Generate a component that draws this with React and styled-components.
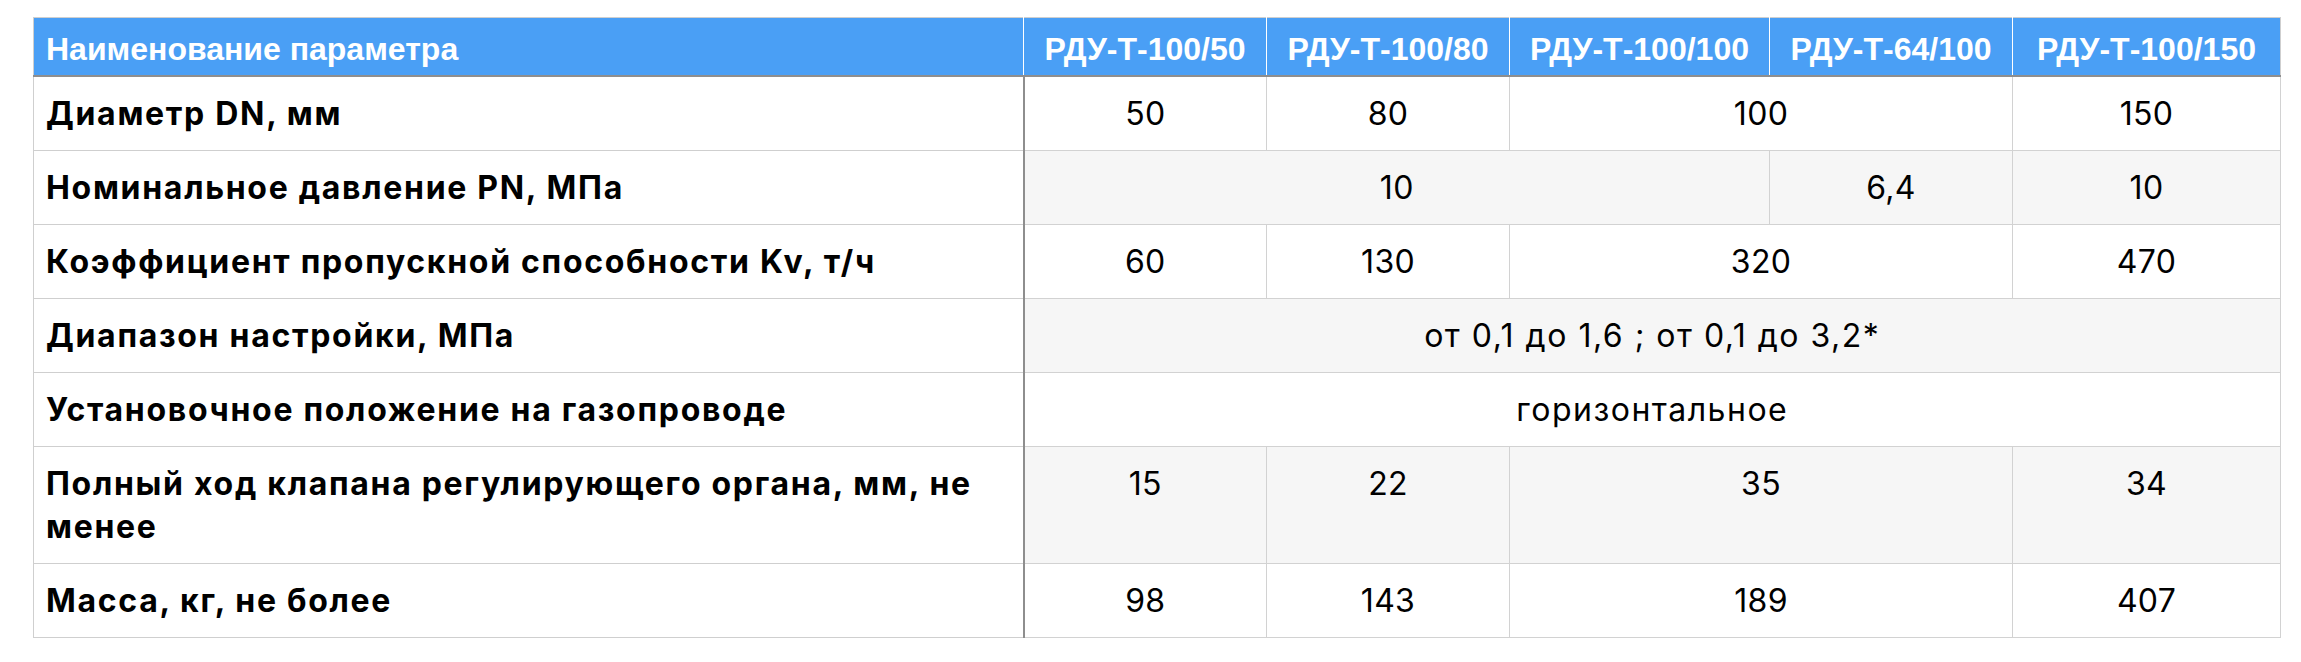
import React from "react";
import styled, { createGlobalStyle } from "styled-components";

const GlobalStyle = createGlobalStyle`
  body {
    margin: 0;
    background: #fff;
    font-family: "Liberation Sans", Arial, Helvetica, sans-serif;
  }
`;

const Page = styled.div`
  padding: 17px 21px 26px 33px;
`;

const Table = styled.table`
  width: 100%;
  table-layout: fixed;
  border-collapse: collapse;
  border: 1px solid #cfcfcf;
  font-size: 32px;
  line-height: 43px;
  color: #000;
`;

const HeadCell = styled.th`
  background: #4a9ff5;
  color: #fff;
  font-family: "Liberation Sans", Arial, sans-serif;
  font-weight: bold;
  text-align: ${(p) => (p.$left ? "left" : "center")};
  padding: 10px 12px 4px;
  border-left: 1px solid #fff;
  border-right: 1px solid #fff;
  border-top: 1px solid #cfcfcf;
  border-bottom: 2px solid #8e8e8e;
  white-space: nowrap;
  overflow: hidden;

  &:first-child {
    border-left: 1px solid #cfcfcf;
  }
  &:last-child {
    border-right: 1px solid #cfcfcf;
  }
`;

const LabelCell = styled.td`
  font-family: Inter, "Liberation Sans", sans-serif;
  font-weight: 700;
  letter-spacing: 1.7px;
  text-align: left;
  vertical-align: top;
  padding: 15px 12px 15px;
  border-top: 1px solid #cfcfcf;
  border-bottom: 1px solid #cfcfcf;
  border-right: 2px solid #8e8e8e;
  background: #fff;
  white-space: nowrap;
`;

const ValueCell = styled.td`
  font-family: Inter, "Liberation Sans", sans-serif;
  letter-spacing: ${(p) => (p.$text ? "1.5px" : "0.3px")};
  text-align: center;
  vertical-align: top;
  padding: 15px 12px 15px;
  border: 1px solid #d2d2d2;
  background: ${(p) => (p.$shaded ? "#f6f6f6" : "#fff")};
`;

const models = ["РДУ-Т-100/50", "РДУ-Т-100/80", "РДУ-Т-100/100", "РДУ-Т-64/100", "РДУ-Т-100/150"];
const widths = [990, 243, 243, 260, 243, 268];

const rows = [
  { label: "Диаметр DN, мм", cells: [["50"], ["80"], ["100", 2], ["150"]] },
  { label: "Номинальное давление PN, МПа", cells: [["10", 3], ["6,4"], ["10"]] },
  { label: "Коэффициент пропускной способности Kv, т/ч", cells: [["60"], ["130"], ["320", 2], ["470"]] },
  { label: "Диапазон настройки, МПа", cells: [["от 0,1 до 1,6 ; от 0,1 до 3,2*", 5]] },
  { label: "Установочное положение на газопроводе", cells: [["горизонтальное", 5]] },
  {
    label: (
      <>
        Полный ход клапана регулирующего органа, мм, не
        <br />
        менее
      </>
    ),
    cells: [["15"], ["22"], ["35", 2], ["34"]],
  },
  { label: "Масса, кг, не более", cells: [["98"], ["143"], ["189", 2], ["407"]] },
];

export default function App() {
  return (
    <>
      <GlobalStyle />
      <Page>
        <Table>
          <colgroup>
            {widths.map((w, i) => (
              <col key={i} style={{ width: w }} />
            ))}
          </colgroup>
          <thead>
            <tr>
              <HeadCell $left>Наименование параметра</HeadCell>
              {models.map((m) => (
                <HeadCell key={m}>{m}</HeadCell>
              ))}
            </tr>
          </thead>
          <tbody>
            {rows.map((row, i) => (
              <tr key={i}>
                <LabelCell>{row.label}</LabelCell>
                {row.cells.map(([v, span], j) => (
                  <ValueCell key={j} colSpan={span || 1} $shaded={i % 2 === 1} $text={span === 5}>
                    {v}
                  </ValueCell>
                ))}
              </tr>
            ))}
          </tbody>
        </Table>
      </Page>
    </>
  );
}
